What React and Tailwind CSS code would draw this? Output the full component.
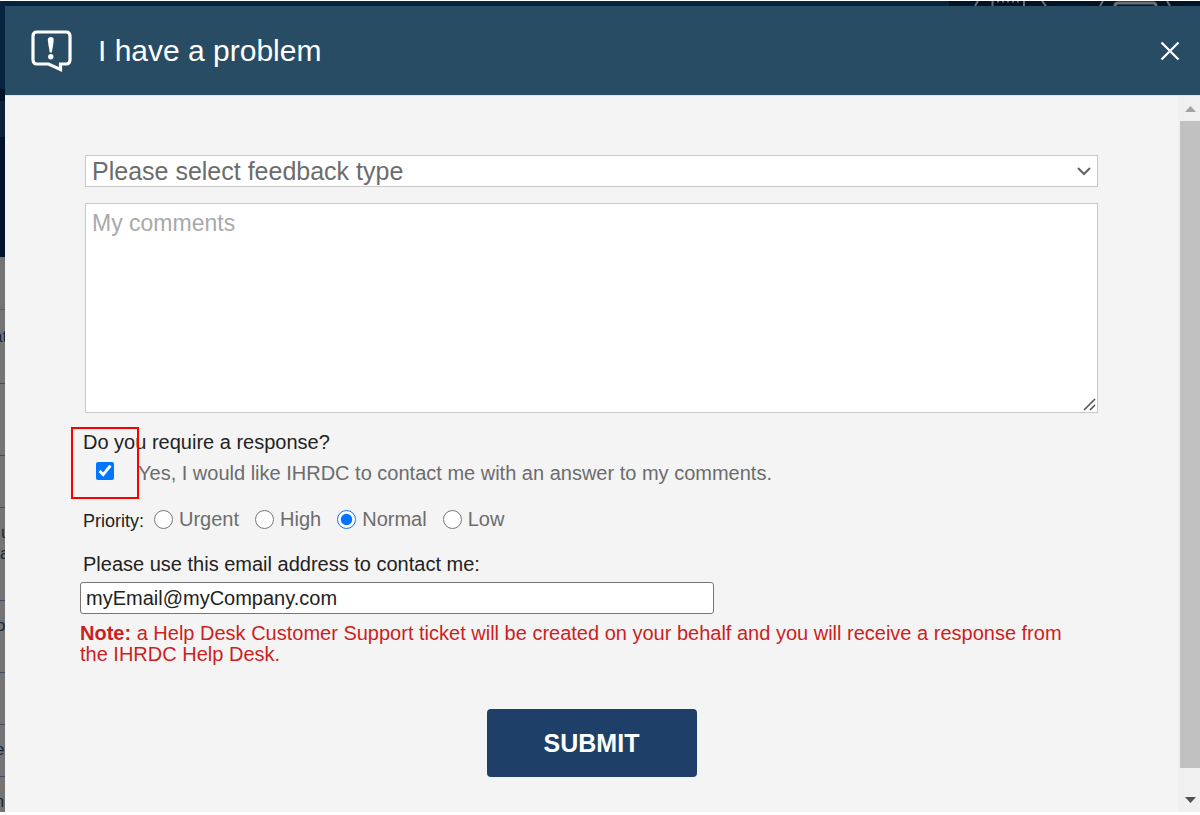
import { useState } from 'react';

const priorities = ["Urgent", "High", "Normal", "Low"];

// Rows of the dimmed page that stay visible beside the dialog
const pageRows = [
    { id: 1, text: "", className: "h-[83px] bg-[#06233f]" },
    { id: 2, text: "", className: "h-3 bg-[#00132a]" },
    { id: 3, text: "", className: "h-9 bg-[#10213a]" },
    { id: 4, text: "", className: "h-[120px] bg-[#00152d]" },
    { id: 5, text: "", className: "h-[53px] border-b border-[#5f5f5f]" },
    { id: 6, text: "at", className: "h-[74px] border-b border-[#40505f] pt-4 -indent-[7px]" },
    { id: 7, text: "", className: "h-[72px] border-b border-[#40505f]" },
    { id: 8, text: "", className: "h-[52px] border-b border-[#40505f]" },
    { id: 9, text: "u a", className: "h-[93px] border-b border-[#40505f] pt-3.5 indent-px" },
    { id: 10, text: "o", className: "h-[72px] border-b border-[#40505f] pt-3.5 -indent-[4px]" },
    { id: 11, text: "", className: "h-[52px] border-b border-[#40505f]" },
    { id: 12, text: "e", className: "h-[52px] border-b border-[#40505f] pt-3.5 -indent-[5px]" },
    { id: 13, text: "m", className: "flex-1 pt-3.5 -indent-[10px]" },
];

function ProblemIcon() {
    return (
        <svg width="42" height="44" viewBox="0 0 42 44" fill="none" aria-hidden="true">
            <path
                d="M6 3H35Q39 3 39 7V30.500Q39 35 35 35H29.500V40.500L17.500 35H6Q2 35 2 30.500V7Q2 3 6 3Z"
                stroke="white"
                strokeWidth="3.2"
                strokeLinejoin="miter"
            />
            <path d="M16.800 10.800Q17 8 19.800 8Q22.600 8 22.700 10.800Q22.600 14 20.800 23.600H18.800Q17 14 16.800 10.800Z" fill="white" />
            <circle cx="19.800" cy="27.800" r="2.700" fill="white" />
        </svg>
    );
}

function Scrollbar() {
    return (
        <div className="w-[22px] shrink-0 bg-[#f0f0f0] pl-0.5 flex flex-col items-center" aria-hidden="true">
            <svg className="h-[25px] shrink-0" width="20" height="25" viewBox="0 0 20 25">
                <path d="M5 16L10.5 10L16 16Z" fill="#a3a3a3" />
            </svg>
            <div className="w-full flex-1 bg-[#c1c1c1]" />
            <svg className="h-11 shrink-0" width="20" height="44" viewBox="0 0 20 44">
                <path d="M5 29H16L10.5 35Z" fill="#505050" />
            </svg>
        </div>
    );
}

export default function App() {
    const [priority, setPriority] = useState("Normal");
    const [needsResponse, setNeedsResponse] = useState(true);
    const [email, setEmail] = useState("myEmail@myCompany.com");

    return (
        <div className="min-h-screen flex flex-col bg-white pt-px pb-[3px] font-['Liberation_Sans',Arial,sans-serif]">
            {/* Top edge of the page behind */}
            <div className="h-[5px] flex justify-end bg-[#06233f]">
                <svg className="bg-[#001428]" width="251" height="5" viewBox="0 0 251 5" fill="none" stroke="#6b6f72" strokeWidth="2" aria-hidden="true">
                    <path d="M26 5L29 0M43.500 0V5M75 0V5M93 0L97 5M151 5L154 0M218 0L221 5" />
                    <path d="M48 .5H71" strokeDasharray="2 3" />
                    <path d="M166 5Q166 2 169 2H204Q207 2 207 5" strokeWidth="3" />
                </svg>
            </div>

            <div className="flex-1 flex">
                {/* Left edge of the page behind */}
                <div className="w-[5px] shrink-0 overflow-hidden flex flex-col bg-[#747474] text-[#14283c] text-[17px] leading-[21px]" aria-hidden="true">
                    {pageRows.map((row) => (
                        <div key={row.id} className={row.className}>{row.text}</div>
                    ))}
                </div>

                <div className="flex-1 min-w-0 flex flex-col bg-[#f4f4f4]" role="dialog" aria-labelledby="dialog-title">
                    {/* Header */}
                    <header className="h-[90px] shrink-0 flex items-center bg-[#284c63] border-b border-[#dde5ec] pl-[26px] pr-5">
                        <ProblemIcon />
                        <h1 id="dialog-title" className="ml-[25px] text-[30px] leading-9 text-white">I have a problem</h1>
                        <button type="button" className="ml-auto" aria-label="Close">
                            <svg width="20" height="20" viewBox="0 0 20 20" stroke="white" strokeWidth="2.2" aria-hidden="true">
                                <path d="M1.500 1.500L18.500 18.500M18.500 1.500L1.500 18.500" />
                            </svg>
                        </button>
                    </header>

                    <div className="flex-1 flex">
                        <form className="flex-1 min-w-0 px-[75px] pt-[59px] pb-[35px] text-[20px] leading-6" onSubmit={(e) => e.preventDefault()}>
                            <div className="px-[5px]">
                                <div className="relative">
                                    <select
                                        aria-label="Feedback type"
                                        className="block w-full h-8 appearance-none rounded-none border border-[#c8c8c8] bg-white px-1.5 text-[25px] leading-[30px] text-[#6c6c6c]"
                                    >
                                        <option>Please select feedback type</option>
                                    </select>
                                    <svg className="absolute right-1.5 top-3 pointer-events-none" width="15" height="10" viewBox="0 0 15 10" fill="none" stroke="#666" strokeWidth="2.2" aria-hidden="true">
                                        <path d="M1 1L7 7L13 1" />
                                    </svg>
                                </div>
                                <div className="relative mt-4">
                                    <textarea
                                        aria-label="My comments"
                                        placeholder="My comments"
                                        className="block w-full h-[210px] resize-none border border-[#c8c8c8] bg-white px-1.5 py-1.5 text-[23px] leading-[26px] text-[#6c6c6c] placeholder:text-[#a9a9a9]"
                                    />
                                    <svg className="absolute right-0.5 bottom-0.5 pointer-events-none" width="13" height="13" viewBox="0 0 13 13" stroke="#555" strokeWidth="1.6" aria-hidden="true">
                                        <path d="M1 12L12 1M7 12L12 7" />
                                    </svg>
                                </div>
                            </div>

                            {/* Response */}
                            <div className="relative mt-[17px] pl-[3px]">
                                <p className="text-[#222]">Do you require a response?</p>
                                <div className="mt-[7px] flex items-center">
                                    <input
                                        id="response"
                                        type="checkbox"
                                        checked={needsResponse}
                                        onChange={(e) => setNeedsResponse(e.target.checked)}
                                        className="ml-[13px] mr-6 mb-1 size-[18px] accent-[#0075ff]"
                                    />
                                    <label htmlFor="response" className="text-[#6c6c6c]">Yes, I would like IHRDC to contact me with an answer to my comments.</label>
                                </div>
                                <div className="absolute -left-[9px] -top-[3px] w-[68px] h-[72px] border-2 border-[#fa0000] pointer-events-none" />
                            </div>

                            {/* Priority */}
                            <div role="radiogroup" aria-labelledby="priority-label" className="mt-[22px] pl-[3px] flex items-start text-[#6c6c6c]">
                                <span id="priority-label" className="mr-2.5 pt-0.5 text-[18px] text-[#222]">Priority:</span>
                                {priorities.map((name) => (
                                    <label key={name} className="mr-4 flex items-center gap-1.5">
                                        <input
                                            type="radio"
                                            name="priority"
                                            checked={priority === name}
                                            onChange={() => setPriority(name)}
                                            className="size-[19px] accent-[#0075ff]"
                                        />
                                        {name}
                                    </label>
                                ))}
                            </div>

                            {/* Email */}
                            <label htmlFor="email" className="mt-[19px] ml-[3px] block text-[#222]">Please use this email address to contact me:</label>
                            <input
                                id="email"
                                type="email"
                                value={email}
                                onChange={(e) => setEmail(e.target.value)}
                                className="mt-1.5 block w-full max-w-[634px] h-8 rounded-[3px] border border-[#767676] bg-white px-[5px] text-[#222]"
                            />
                            <p className="mt-[9px] pr-4 leading-[21px] text-[#cc1f1f]">
                                <strong>Note:</strong> a Help Desk Customer Support ticket will be created on your behalf and you will receive a response from the IHRDC Help Desk.
                            </p>

                            <button type="submit" className="mt-11 mx-auto block w-[210px] h-[68px] rounded bg-[#1e4068] text-[25px] font-bold text-white">
                                SUBMIT
                            </button>
                        </form>
                        <Scrollbar />
                    </div>
                </div>
            </div>
        </div>
    );
}
